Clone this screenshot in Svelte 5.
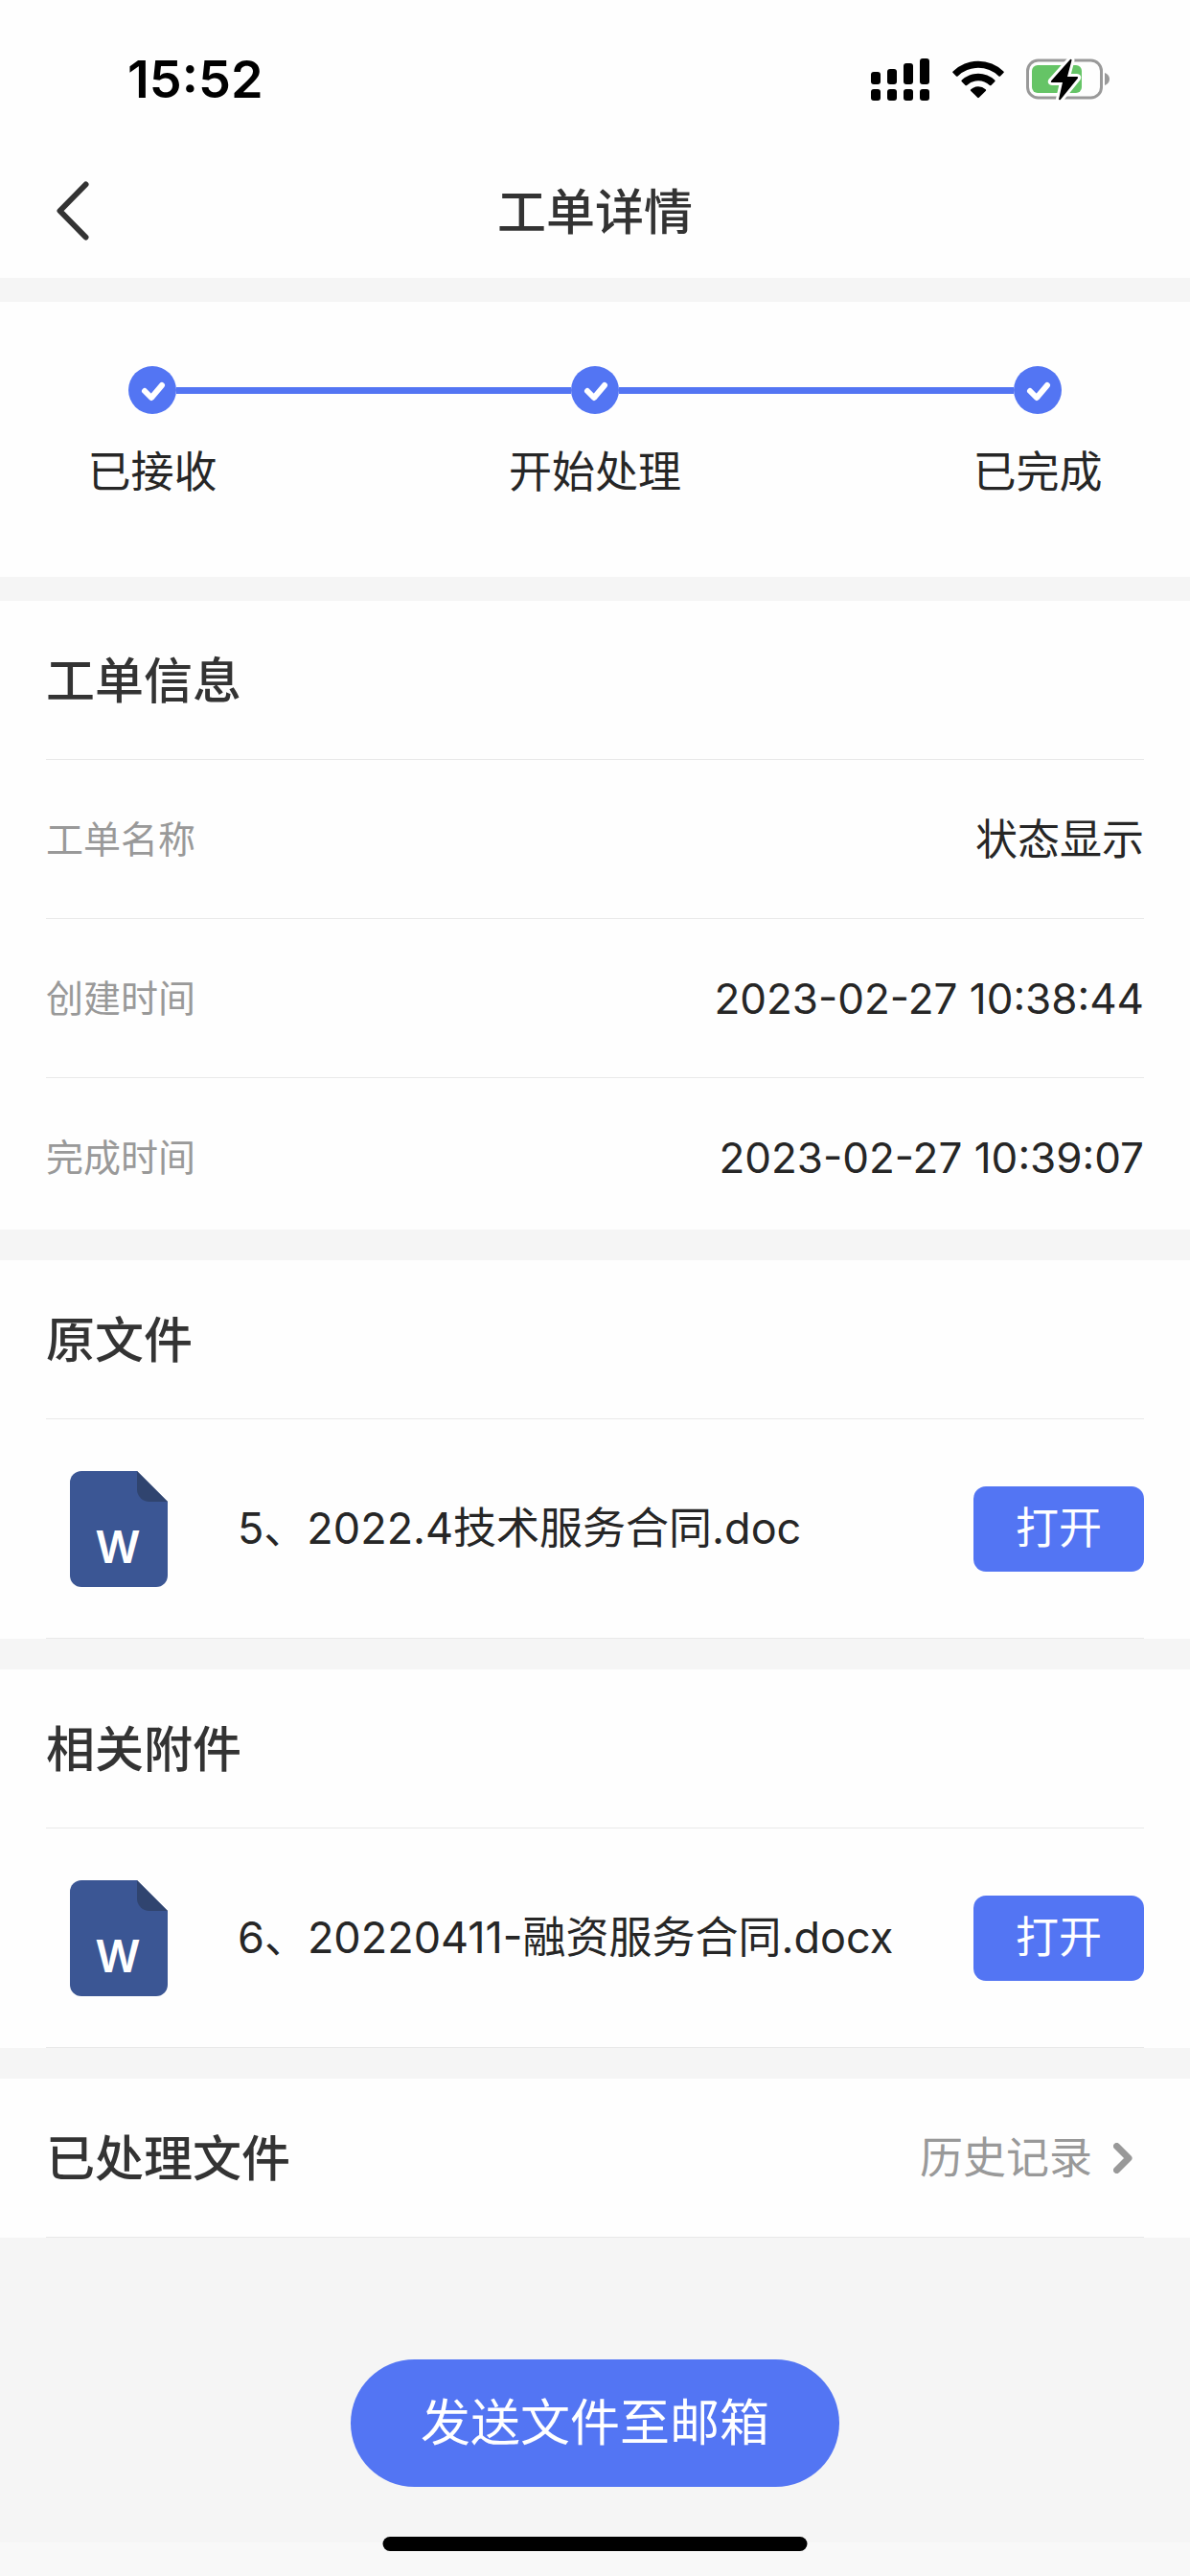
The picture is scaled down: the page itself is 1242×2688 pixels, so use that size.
<script lang="ts">
  type FileItem = { name: string };
  type FileGroup = { title: string; files: FileItem[] };

  const steps = ['已接收', '开始处理', '已完成'];

  const info = [
    { label: '工单名称', value: '状态显示' },
    { label: '创建时间', value: '2023-02-27 10:38:44' },
    { label: '完成时间', value: '2023-02-27 10:39:07' }
  ];

  const groups: FileGroup[] = [
    { title: '原文件', files: [{ name: '5、2022.4技术服务合同.doc' }] },
    { title: '相关附件', files: [{ name: '6、20220411-融资服务合同.docx' }] }
  ];
</script>

<div class="page">
  <header class="top">
    <div class="status-bar">
      <span class="clock">15:52</span>
      <div class="status-icons">
        <svg width="62" height="44" viewBox="0 0 62 44" aria-hidden="true">
          <rect x="0" y="14" width="10" height="13" rx="3" />
          <rect x="17" y="11" width="10" height="16" rx="3" />
          <rect x="34" y="5" width="10" height="22" rx="3" />
          <rect x="51" y="0" width="10" height="27" rx="3" />
          <rect x="0" y="32" width="10" height="12" rx="3" />
          <rect x="17" y="32" width="10" height="12" rx="3" />
          <rect x="34" y="32" width="10" height="12" rx="3" />
          <rect x="51" y="32" width="10" height="12" rx="3" />
        </svg>
        <svg width="54" height="40" viewBox="0 0 54 40" aria-hidden="true">
          <path d="M0.6 11.4a38 38 0 0 1 52.8 0q.8.8 0 1.600l-3.400 3.400q-.8.8-1.600 0a31 31 0 0 0-42.800 0q-.8.8-1.600 0l-3.400-3.400q-.8-.8 0-1.600z" />
          <path d="M9.800 20.600a25 25 0 0 1 34.400 0q.8.8 0 1.600l-3.700 3.700q-.8.8-1.600 0a17.400 17.400 0 0 0-23.800 0q-.8.8-1.600 0l-3.700-3.700q-.8-.8 0-1.600z" />
          <path d="M19.300 30.200a11.600 11.600 0 0 1 15.400 0q.9.8 0 1.700l-6.900 6.900q-.8.8-1.600 0l-6.900-6.900q-.9-.9 0-1.700z" />
        </svg>
        <svg width="88" height="44" viewBox="0 0 88 44" aria-hidden="true">
          <rect x="1.500" y="2" width="77" height="39" rx="11" fill="none" stroke="#999" stroke-width="3" />
          <path d="M82 15v13c3-1 5-3.500 5-6.500s-2-5.500-5-6.500z" fill="#999" />
          <rect x="6" y="7" width="52" height="29" rx="6" fill="#65c466" />
          <path d="M46 1L26 23.500q-.8 1.500 1 1.500h11L34 42.500q.5 1.500 2 .3L54 20.500q.7-1.500-1-1.500H43L47.500 2Q47.500 0 46 1z" fill="#000" stroke="#fff" stroke-width="6" paint-order="stroke" stroke-linejoin="round" />
        </svg>
      </div>
    </div>
    <div class="nav">
      <button class="back" aria-label="返回">
        <svg width="34" height="62" viewBox="0 0 34 62" aria-hidden="true">
          <path d="M30.500 3.500L3.500 31l27 27.500" />
        </svg>
      </button>
      <h1>工单详情</h1>
    </div>
  </header>

  <section class="progress">
    <div class="track">
      {#each steps as step, i}
        {#if i > 0}
          <span class="track-line"></span>
        {/if}
        <svg width="50" height="50" viewBox="0 0 50 50" aria-hidden="true">
          <circle cx="25" cy="25" r="25" fill="#5375f3" />
          <path d="M17 26l7 7 11-13" fill="none" stroke="#fff" stroke-width="6" stroke-linecap="round" stroke-linejoin="round" />
        </svg>
      {/each}
    </div>
    <ol class="labels">
      {#each steps as step}
        <li>{step}</li>
      {/each}
    </ol>
  </section>

  <section class="card">
    <h2>工单信息</h2>
    <dl>
      {#each info as row}
        <div class="info-row">
          <dt>{row.label}</dt>
          <dd>{row.value}</dd>
        </div>
      {/each}
    </dl>
  </section>

  {#each groups as group}
    <section class="card">
      <h2>{group.title}</h2>
      {#each group.files as file}
        <div class="file-row">
          <svg class="file-icon" width="102" height="121" viewBox="0 0 102 121" aria-hidden="true">
            <path d="M12 0h58l32 32v77a12 12 0 0 1-12 12H12a12 12 0 0 1-12-12V12A12 12 0 0 1 12 0z" fill="#3b5694" />
            <path d="M70 0l32 32H83a13 13 0 0 1-13-13z" fill="#30446f" />
            <text x="50" y="96" text-anchor="middle">W</text>
          </svg>
          <span class="file-name">{file.name}</span>
          <button class="open">打开</button>
        </div>
      {/each}
    </section>
  {/each}

  <section class="card">
    <div class="done-row">
      <h2>已处理文件</h2>
      <a class="history" href="#history">
        历史记录
        <svg width="20" height="32" viewBox="0 0 20 32" aria-hidden="true">
          <path d="M3.500 3.500L16 16 3.500 28.500" />
        </svg>
      </a>
    </div>
  </section>

  <div class="actions">
    <button class="send">发送文件至邮箱</button>
  </div>

  <footer class="home">
    <span class="home-bar"></span>
  </footer>
</div>

<style>
  :global(body) {
    margin: 0;
    background: #f5f5f5;
  }

  .page {
    display: flex;
    flex-direction: column;
    min-height: 100vh;
    font-family: 'Inter', 'Noto Sans CJK SC', sans-serif;
    font-size: 45px;
    line-height: 64px;
    color: #262626;
  }

  h1,
  h2,
  dl,
  dd,
  ol {
    margin: 0;
    padding: 0;
  }

  button {
    border: 0;
    padding: 0;
    font: inherit;
    cursor: pointer;
  }

  svg {
    display: block;
    flex-shrink: 0;
  }

  .top {
    background: #fefefe;
  }

  .status-bar {
    display: flex;
    align-items: center;
    justify-content: space-between;
    box-sizing: border-box;
    height: 150px;
    padding: 16px 83px 0 133px;
  }

  .clock {
    font-size: 54px;
    font-weight: 600;
    color: #000;
  }

  .status-icons {
    display: flex;
    align-items: center;
    gap: 23px;
  }

  .nav {
    display: grid;
    grid-template-columns: 1fr auto 1fr;
    align-items: center;
    height: 140px;
    padding: 0 48px;
  }

  .back {
    justify-self: start;
    padding: 0 11px;
    background: none;
  }

  .back path {
    fill: none;
    stroke: #333;
    stroke-width: 6;
    stroke-linecap: round;
    stroke-linejoin: round;
  }

  h1,
  h2 {
    font-size: 51px;
    font-weight: 500;
    color: #333;
  }

  h1 {
    padding-top: 4px;
  }

  .progress {
    margin-top: 25px;
    padding: 67px 0 77px;
    background: #fefefe;
  }

  .track {
    display: flex;
    align-items: center;
    padding: 0 134px;
  }

  .track-line {
    flex: 1;
    height: 7px;
    background: #5375f3;
  }

  .labels {
    display: flex;
    justify-content: space-between;
    padding: 29px 67px 0;
    list-style: none;
  }

  .labels li {
    width: 184px;
    text-align: center;
    white-space: nowrap;
  }

  .card {
    margin-top: 32px;
    padding: 0 48px;
    background: #fefefe;
  }

  .progress + .card {
    margin-top: 25px;
  }

  .card h2 {
    padding: 52px 0 49px;
    border-bottom: 1px solid #e9e9e9;
  }

  .info-row {
    display: flex;
    align-items: center;
    justify-content: space-between;
    padding: 51px 0 50px;
    border-bottom: 1px solid #e9e9e9;
  }

  .info-row:last-child {
    padding-bottom: 43px;
    border-bottom: 0;
  }

  dt {
    font-size: 39px;
    color: #999;
  }

  dd {
    font-size: 44px;
  }

  .file-row {
    display: flex;
    align-items: center;
    height: 228px;
    border-bottom: 1px solid #e9e9e9;
  }

  .file-icon {
    margin: 0 73px 0 25px;
  }

  .file-icon text {
    font-size: 46px;
    font-weight: 600;
    fill: #fff;
  }

  .file-name {
    flex: 1;
  }

  .open {
    width: 178px;
    height: 89px;
    border-radius: 13px;
    background: #5375f3;
    color: #fff;
  }

  .done-row {
    display: flex;
    align-items: center;
    justify-content: space-between;
    border-bottom: 1px solid #e9e9e9;
  }

  .done-row h2 {
    border-bottom: 0;
  }

  .history {
    display: flex;
    align-items: center;
    gap: 22px;
    padding-right: 12px;
    color: #999;
    text-decoration: none;
  }

  .history path {
    fill: none;
    stroke: #999;
    stroke-width: 7;
    stroke-linecap: round;
    stroke-linejoin: round;
  }

  .actions {
    display: flex;
    justify-content: center;
    padding: 127px 0 58px;
  }

  .send {
    padding: 35px 73px 34px;
    border-radius: 67px;
    background: #5375f3;
    font-size: 52px;
    color: #fff;
  }

  .home {
    position: relative;
    height: 35px;
    margin-top: auto;
    background: #f8f8f8;
  }

  /* sits across the upper edge of the home area */
  .home-bar {
    position: absolute;
    bottom: 26px;
    left: 50%;
    width: 443px;
    height: 15px;
    border-radius: 8px;
    background: #000;
    transform: translateX(-50%);
  }
</style>
